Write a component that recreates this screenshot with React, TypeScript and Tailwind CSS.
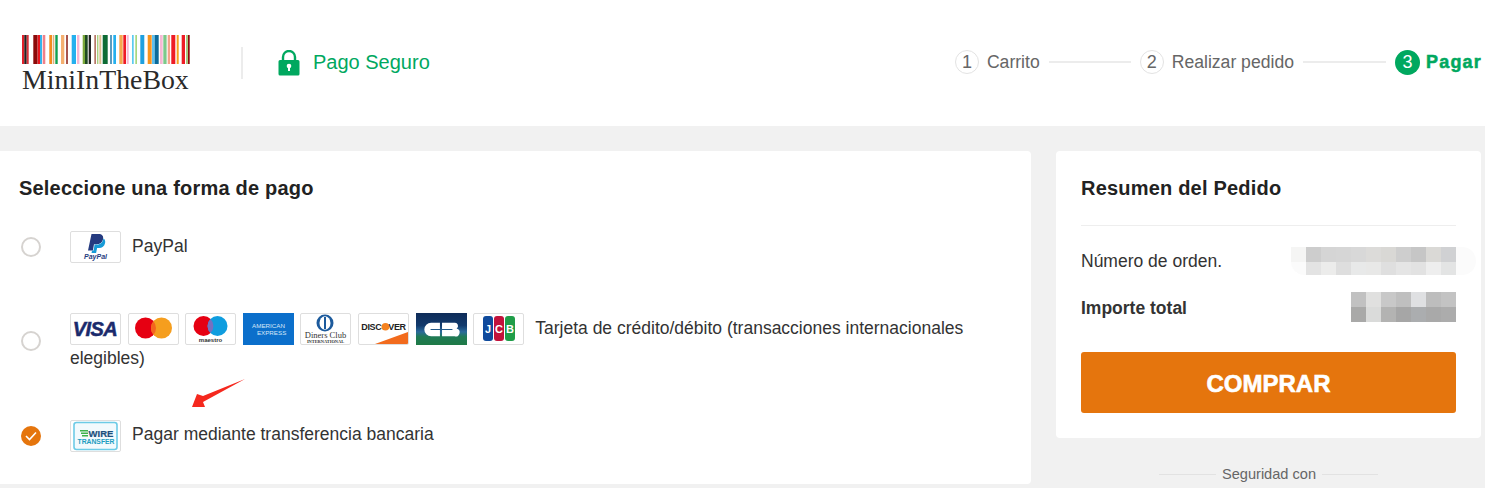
import type { ReactNode } from "react";

const BARS: Array<[number, number, string]> = [
  [21, 2.3, "#e0202a"], [23.3, 2.4, "#222222"], [25.7, 2, "#d8323a"], [32.3, 4.3, "#8b0a0a"], [36.7, 2.3, "#e8141c"],
  [39, 2, "#35b4ec"], [41.700, 2.6, "#f0808a"], [48.300, 2.7, "#f28c1e"], [51.700, 1.600, "#e0b080"], [54.300, 2.4, "#10a050"],
  [60, 3.3, "#f5b070"], [65, 2, "#a8544c"], [70.700, 4.3, "#25b0ee"], [76, 2.4, "#f7b8d4"], [81.700, 2.3, "#7aa83a"],
  [84, 2.7, "#1f4a22"], [87.700, 2.3, "#222222"], [93.300, 1.700, "#b87868"], [96, 1.400, "#a8d080"], [98.300, 2, "#e0c090"],
  [101.700, 5, "#0d6b35"], [109, 2, "#5a9cc0"], [112.300, 2.7, "#25b0ee"], [118.300, 3.4, "#f5a850"], [122.300, 2.700, "#ee1c25"],
  [125.700, 2, "#f7b8d4"], [131, 1.700, "#5ccbf0"], [134.300, 1.700, "#a8d880"], [139.300, 4, "#1ea0e0"], [146.700, 4, "#f7941e"],
  [151, 2.7, "#5cc0f0"], [153.700, 4, "#0a6a9a"], [159, 2.700, "#f7b8d4"], [162.300, 3.300, "#7cc98a"], [166.700, 2.300, "#f4a58a"],
  [170.300, 4, "#ee1c25"], [175.700, 2, "#f7a21e"], [180.700, 3.300, "#ee1c25"], [185, 2, "#a8c880"], [187, 1.700, "#8b0a0a"],
];

const TOP_BLUR = [
  "bg-[#f5f5f4]", "bg-[#cdcdcd]", "bg-[#d5d5d5]", "bg-[#d6d6d6]", "bg-[#d8d8d8]", "bg-[#dcdbd9]", "bg-[#d9d8d5]", "bg-[#cecece]", "bg-[#c6c6c6]", "bg-[#dad9d6]", "bg-[#d0d1d3]",
  "bg-[#fbfbfb]", "bg-[#e3e3e3]", "bg-[#ececeb]", "bg-[#dedede]", "bg-[#e8e9e9]", "bg-[#e8e8e7]", "bg-[#dfdfdf]", "bg-[#e5e5e5]", "bg-[#e2e2e2]", "bg-[#eeeeee]", "bg-[#e3e4e4]",
];

const TOTAL_BLUR = [
  "bg-[#c1c1c1]", "bg-[#e0e0df]", "bg-[#c8c8c8]", "bg-[#bfbfbf]", "bg-[#dfe0e2]", "bg-[#bdbdbd]", "bg-[#c3c3c3]",
  "bg-[#a9a9a8]", "bg-[#dadbda]", "bg-[#b3b3b2]", "bg-[#a6a6a6]", "bg-[#abadaf]", "bg-[#a9a9a9]", "bg-[#acacac]",
];

function Logo() {
  return (
    <div className="w-[168px]">
      <svg width="168" height="29" viewBox="21 36 168 29" className="block">
        {BARS.map(([x, w, c]) => (
          <rect key={x} x={x} y="36" width={w} height="29" fill={c} />
        ))}
      </svg>
      <div className="mt-[1px] [font-family:'Liberation_Serif',serif] text-[27.8px] leading-[30px] text-[#2a2a2a] whitespace-nowrap">
        MiniInTheBox
      </div>
    </div>
  );
}

function LockIcon() {
  return (
    <svg width="22" height="26" viewBox="0 0 22 26">
      <path d="M5 11V7a6 6 0 0 1 12 0v4" fill="none" stroke="#00a85f" strokeWidth="2.4" />
      <path
        d="M2 10h18a1.5 1.5 0 0 1 1.5 1.5V24a1.5 1.5 0 0 1-1.5 1.5H2A1.5 1.5 0 0 1 .5 24V11.500A1.5 1.500 0 0 1 2 10z"
        fill="#00a85f"
      />
      <circle cx="11" cy="16" r="2.300" fill="#fff" />
      <rect x="10" y="16" width="2" height="5" fill="#fff" />
    </svg>
  );
}

function Step({ n, label }: { n: number; label: string }) {
  return (
    <div className="flex items-center gap-[8px]">
      <span className="flex h-[24px] w-[24px] items-center justify-center rounded-full border border-[#e3e3e3] pt-[1px] text-[18px] text-[#666]">
        {n}
      </span>
      <span className="text-[17.6px] text-[#666] whitespace-nowrap">{label}</span>
    </div>
  );
}

function Header() {
  return (
    <header className="flex h-[126px] items-center bg-white pl-[22px] pr-[3px]">
      <div className="mt-[4px]">
        <Logo />
      </div>
      <div className="ml-[51px] h-[32px] w-[2px] bg-[#ececec]" />
      <div className="ml-[35px] flex items-center gap-[13px]">
        <LockIcon />
        <span className="mt-[-2px] text-[20px] text-[#00a85f]">Pago Seguro</span>
      </div>
      <div className="mt-[-2px] ml-auto flex items-center">
        <Step n={1} label="Carrito" />
        <div className="mx-[9px] h-[2px] w-[82px] bg-[#ececec]" />
        <Step n={2} label="Realizar pedido" />
        <div className="mx-[9px] h-[2px] w-[83px] bg-[#ececec]" />
        <div className="flex items-center gap-[6px]">
          <span className="flex h-[25px] w-[25px] items-center justify-center rounded-full bg-[#00a85f] text-[18px] text-white">
            3
          </span>
          <span className="text-[18px] font-bold tracking-[1.2px] text-[#00a85f] [-webkit-text-stroke:0.5px_#00a85f]">
            Pagar
          </span>
        </div>
      </div>
    </header>
  );
}

function Radio({ checked = false }: { checked?: boolean }) {
  if (checked) {
    return (
      <span className="flex h-[20px] w-[20px] shrink-0 items-center justify-center rounded-full bg-[#e5750d]">
        <svg width="12" height="10" viewBox="0 0 12 10">
          <path d="M1 5l3.500 3.500L11 1.500" fill="none" stroke="#fff" strokeWidth="1.600" />
        </svg>
      </span>
    );
  }
  return <span className="block h-[20px] w-[20px] shrink-0 rounded-full border-2 border-[#d6d3d0] bg-white" />;
}

function PayIcon({ children, bare = false }: { children: ReactNode; bare?: boolean }) {
  return (
    <span
      className={
        bare
          ? "mr-[6.6px] mb-[-2px] inline-block h-[32px] w-[51px] align-top overflow-hidden"
          : "mr-[6.6px] mb-[-2px] inline-block h-[32px] w-[51px] align-top overflow-hidden rounded-[2px] border border-[#dedede] bg-white"
      }
    >
      <svg width="100%" height="100%" viewBox="0 0 49 30" className="block">
        {children}
      </svg>
    </span>
  );
}

const paypal = (
  <>
    <path d="M20.500 2h7c3.500 0 5.200 2 4.600 5-.7 3.600-3.300 5.200-6.500 5.200H23l-1.100 6.300H17z" fill="#253b80" />
    <path d="M32.500 6.500c1.500 1 2 2.500 1.600 4.500-.7 3.400-3.100 5-6 5h-2l-1 5H20.500l.6-2.500h1.500l1-6h2.400c3 0 5.500-1.500 6.500-6z" fill="#179bd7" />
    <text x="24.500" y="27" textAnchor="middle" fontSize="7" fontWeight="700" fontStyle="italic" fill="#253b80" fontFamily="Liberation Sans, sans-serif">
      PayPal
    </text>
  </>
);

const visa = (
  <text x="24" y="22" textAnchor="middle" fontSize="20" fontWeight="700" fontStyle="italic" fill="#1a2a6c" stroke="#1a2a6c" strokeWidth=".5" letterSpacing="-.6" fontFamily="Liberation Sans, sans-serif">
    VISA
  </text>
);

const mastercard = (
  <>
    <circle cx="16.500" cy="14" r="10.500" fill="#e60012" />
    <circle cx="32.500" cy="14" r="10.500" fill="#f59e1e" />
    <path d="M24.500 7.200a10.500 10.500 0 0 1 0 13.600a10.500 10.500 0 0 1 0-13.600z" fill="#f4641e" />
  </>
);

const maestro = (
  <>
    <circle cx="17.500" cy="12" r="10" fill="#e60012" />
    <circle cx="31.500" cy="12" r="10" fill="#0f9ddf" />
    <path d="M24.500 4.900a10 10 0 0 1 0 14.200a10 10 0 0 1 0-14.200z" fill="#7670c0" />
    <text x="24.500" y="28" textAnchor="middle" fontSize="6" fontWeight="700" fill="#333" fontFamily="Liberation Sans, sans-serif">
      maestro
    </text>
  </>
);

const amex = (
  <>
    <rect x="-2" y="-2" width="53" height="34" fill="#0b6fcb" />
    <text x="24.500" y="14" textAnchor="middle" fontSize="6" fill="#d6e8f8" fontFamily="Liberation Sans, sans-serif">
      AMERICAN
    </text>
    <text x="27.500" y="20.500" textAnchor="middle" fontSize="6" fill="#d6e8f8" fontFamily="Liberation Sans, sans-serif">
      EXPRESS
    </text>
  </>
);

const diners = (
  <>
    <circle cx="24" cy="9" r="8.500" fill="#1c5a9c" />
    <ellipse cx="24" cy="9" rx="5.500" ry="6.800" fill="#fff" />
    <rect x="23" y="3" width="2" height="12" fill="#1c5a9c" />
    <text x="24.500" y="23.500" textAnchor="middle" fontSize="8.500" fill="#333" fontFamily="Liberation Serif, serif">
      Diners Club
    </text>
    <text x="24.500" y="28.500" textAnchor="middle" fontSize="4.400" fontWeight="700" fill="#333" fontFamily="Liberation Serif, serif">
      INTERNATIONAL
    </text>
  </>
);

const discover = (
  <>
    <path d="M16 30L49 18v12z" fill="#f26b1d" />
    <text x="24.500" y="16" textAnchor="middle" fontSize="9" fontWeight="700" fill="#222" letterSpacing="-.3" fontFamily="Liberation Sans, sans-serif">
      DISCOVER
    </text>
    <circle cx="26.500" cy="12.800" r="3.800" fill="#f58220" />
  </>
);

const cb = (
  <>
    <defs>
      <linearGradient id="cb-fill" x1="0" y1="0" x2="0" y2="1">
        <stop offset="0" stopColor="#0e2a56" />
        <stop offset=".4" stopColor="#123a6c" />
        <stop offset=".58" stopColor="#2a6a9a" />
        <stop offset=".72" stopColor="#1f7a55" />
        <stop offset="1" stopColor="#1f7a43" />
      </linearGradient>
    </defs>
    <rect x="-2" y="-2" width="53" height="34" fill="url(#cb-fill)" />
    <path d="M23 9h-8.500a6.500 6.500 0 0 0 0 13H23v-6h-9v-1h9z" fill="#fff" />
    <path d="M25 9h12a3 3 0 0 1 2 5.500 3.500 3.500 0 0 1-2 7.500H25v-6h10v-1H25z" fill="#fff" />
  </>
);

const jcb = (
  <>
    <rect x="9" y="2" width="10" height="25" rx="3" fill="#0f4a9c" />
    <rect x="20" y="2" width="10" height="25" rx="3" fill="#c2123c" />
    <rect x="31" y="2" width="10" height="25" rx="3" fill="#1f9d48" />
    <text x="14" y="19" textAnchor="middle" fontSize="11" fontWeight="700" fill="#fff" fontFamily="Liberation Sans, sans-serif">J</text>
    <text x="25" y="19" textAnchor="middle" fontSize="11" fontWeight="700" fill="#fff" fontFamily="Liberation Sans, sans-serif">C</text>
    <text x="36" y="19" textAnchor="middle" fontSize="11" fontWeight="700" fill="#fff" fontFamily="Liberation Sans, sans-serif">B</text>
  </>
);

const wire = (
  <>
    <rect x="3" y="1.500" width="43" height="27" rx="2.500" fill="#f2fafd" stroke="#6ccbe6" strokeWidth="1.600" />
    <rect x="9" y="9" width="8" height="1.500" fill="#3eb24a" />
    <rect x="10" y="11.500" width="7" height="1.500" fill="#3eb24a" />
    <rect x="11" y="14" width="6" height="1.500" fill="#3eb24a" />
    <text x="30" y="16" textAnchor="middle" fontSize="9.500" fontWeight="700" fill="#1c4f7c" stroke="#1c4f7c" strokeWidth=".2" fontFamily="Liberation Sans, sans-serif">
      WIRE
    </text>
    <text x="25" y="23" textAnchor="middle" fontSize="6.800" fontWeight="700" fill="#1d9cc0" fontFamily="Liberation Sans, sans-serif">
      TRANSFER
    </text>
  </>
);

function PaymentPanel() {
  return (
    <section className="h-[333px] w-[1031px] shrink-0 rounded-r-[4px] bg-white pl-[19px] pr-[20px] pt-[25px]">
      <h2 className="text-[20px] leading-[24px] font-bold tracking-[0.2px] text-[#222]">Seleccione una forma de pago</h2>

      <div className="mt-[31px] flex items-start">
        <div className="ml-[2px] mt-[6px]">
          <Radio />
        </div>
        <div className="ml-[29px] h-[32px] text-[17.5px] leading-[30px] text-[#333]">
          <PayIcon>{paypal}</PayIcon>
          <span className="ml-[4.500px] align-top">PayPal</span>
        </div>
      </div>

      <div className="mt-[50px] flex items-start">
        <div className="ml-[2px] mt-[18px]">
          <Radio />
        </div>
        <div className="ml-[29px] w-[920px] text-[17.5px] leading-[30px] text-[#333]">
          <PayIcon>{visa}</PayIcon>
          <PayIcon>{mastercard}</PayIcon>
          <PayIcon>{maestro}</PayIcon>
          <PayIcon bare>{amex}</PayIcon>
          <PayIcon>{diners}</PayIcon>
          <PayIcon>{discover}</PayIcon>
          <PayIcon bare>{cb}</PayIcon>
          <PayIcon>{jcb}</PayIcon>
          <span className="ml-[4.500px]">Tarjeta de crédito/débito (transacciones internacionales</span>{" "}
          <span>elegibles)</span>
        </div>
      </div>

      <div className="mt-[47px] flex items-start">
        <div className="ml-[2px] mt-[6px]">
          <Radio checked />
        </div>
        <div className="ml-[29px] h-[32px] text-[17.5px] leading-[28px] text-[#333]">
          <PayIcon>{wire}</PayIcon>
          <span className="ml-[4.500px] align-top">Pagar mediante transferencia bancaria</span>
        </div>
      </div>
    </section>
  );
}

function SummaryPanel() {
  return (
    <div className="w-[425px] shrink-0">
      <section className="h-[287px] rounded-[4px] bg-white px-[25px] pt-[25px]">
        <h2 className="border-b border-[#eeeeee] pb-[25px] text-[20px] leading-[24px] font-bold tracking-[0.2px] text-[#222]">
          Resumen del Pedido
        </h2>
        <div className="mt-[21px] flex h-[28px] items-center justify-between">
          <span className="text-[17.5px] text-[#333]">Número de orden.</span>
          <div className="mr-[-20px] rounded-r-[14px] rounded-bl-[14px] bg-[#fbfbfb] pr-[20px]">
            <div className="grid w-[165px] grid-cols-11 grid-rows-[15px_13px] overflow-hidden rounded-bl-[14px]">
              {TOP_BLUR.map((c, i) => (
                <span key={i} className={c} />
              ))}
            </div>
          </div>
        </div>
        <div className="mt-[17px] flex h-[30px] items-center justify-between">
          <span className="pt-[2px] text-[17.5px] font-bold text-[#333]">Importe total</span>
          <div className="grid w-[105px] grid-cols-7 grid-rows-[15px_15px]">
            {TOTAL_BLUR.map((c, i) => (
              <span key={i} className={c} />
            ))}
          </div>
        </div>
        <button
          type="button"
          className="mt-[30px] h-[61px] w-full rounded-[3px] bg-[#e5750d] pt-[2px] text-[24px] font-bold text-white [-webkit-text-stroke:0.6px_#fff]"
        >
          COMPRAR
        </button>
      </section>
      <div className="mt-[27px] flex items-center justify-center gap-[6px] text-[14.6px] leading-[18px] text-[#666]">
        <span className="h-px w-[57px] bg-[#e2e2e2]" />
        <span>Seguridad con</span>
        <span className="h-px w-[56px] bg-[#e2e2e2]" />
      </div>
    </div>
  );
}

export default function App() {
  return (
    <div className="relative h-[488px] overflow-hidden bg-[#f1f1f1] [font-family:'Liberation_Sans',Arial,sans-serif]">
      <Header />
      <main className="mt-[25px] flex gap-[25px]">
        <PaymentPanel />
        <SummaryPanel />
      </main>
      {/* red annotation arrow drawn over the page */}
      <svg className="absolute left-[190px] top-[376px]" width="58" height="34" viewBox="0 0 58 34">
        <path d="M55 3L13 20l-6-2L2 31h13l-2-5z" fill="#f5281e" />
      </svg>
    </div>
  );
}
